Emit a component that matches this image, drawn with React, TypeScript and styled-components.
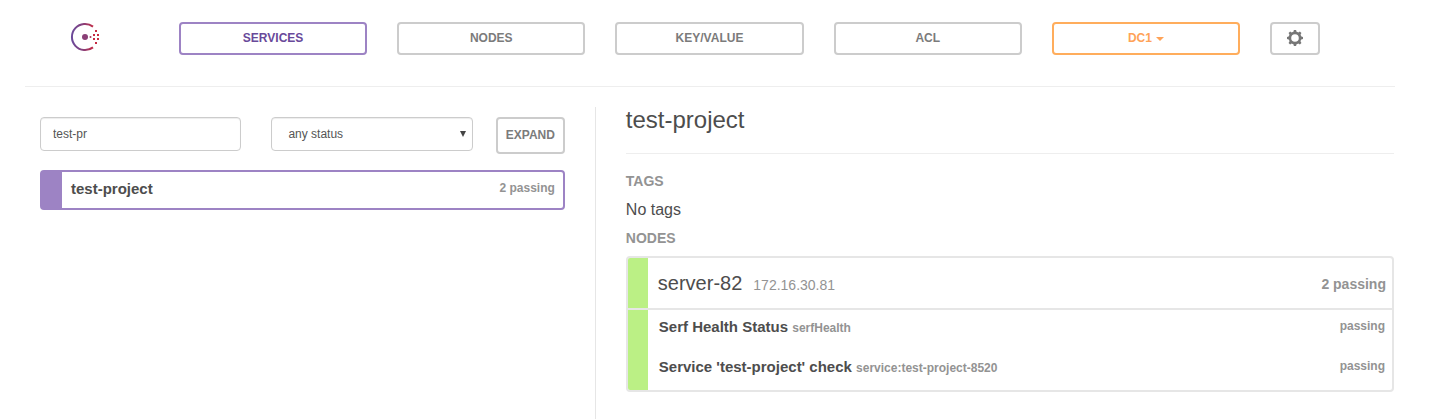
import React, { useState } from 'react';
import styled, { createGlobalStyle } from 'styled-components';

const GlobalStyle = createGlobalStyle`
  *, *::before, *::after { box-sizing: border-box; }
  body {
    margin: 0;
    background: #fff;
    color: #4d4d4d;
    font-family: "Liberation Sans", Arial, sans-serif;
    font-size: 16px;
    line-height: 20px;
  }
  button, input, select { font-family: inherit; }
`;

const Page = styled.div`
  display: flex;
  flex-direction: column;
  min-height: 100vh;
  padding: 0 51px 0 25px;
`;

const Header = styled.header`
  display: flex;
  align-items: flex-start;
  padding: 22px 75px 31px 45px;
  border-bottom: 1px solid #eee;
`;

const Brand = styled.a`
  flex: none;
  width: 109px;
  height: 30px;

  svg { display: block; }
`;

const Nav = styled.nav`
  display: flex;
  flex: 1;
  gap: 30px;
`;

type Tone = 'default' | 'primary' | 'warning';

const tones: Record<Tone, { border: string; text: string }> = {
  default: { border: '#ccc', text: '#7b7b7b' },
  primary: { border: '#9d83c4', text: '#69499a' },
  warning: { border: '#ffad5c', text: '#ffa358' },
};

const Button = styled.button<{ $tone?: Tone; $size?: 'fill' | 'icon' | 'tall' }>`
  display: flex;
  align-items: center;
  justify-content: center;
  flex: ${({ $size = 'fill' }) => ($size === 'fill' ? '1 1 0' : 'none')};
  width: ${({ $size }) => ($size === 'icon' ? '50px' : $size === 'tall' ? '69px' : 'auto')};
  height: ${({ $size }) => ($size === 'tall' ? '37px' : '33px')};
  padding: 0 0 1px;
  border: 2px solid ${({ $tone = 'default' }) => tones[$tone].border};
  border-radius: 4px;
  background: #fff;
  color: ${({ $tone = 'default' }) => tones[$tone].text};
  font-size: 12px;
  font-weight: 700;
  line-height: 16px;
  text-transform: uppercase;
  cursor: pointer;
`;

const Caret = styled.span`
  margin: 2px 0 0 4px;
  border: 4px solid transparent;
  border-top-color: currentColor;
  border-bottom: 0;
`;

const Main = styled.main`
  display: grid;
  grid-template-columns: 5fr 7fr;
  flex: 1;
  padding-top: 20px;
`;

const ListColumn = styled.section`
  padding: 10px 30px 0 15px;
  border-right: 1px solid #e6e6e6;
`;

const DetailColumn = styled.section`
  padding: 0 1px 0 30px;
`;

const Filters = styled.form`
  display: flex;
  align-items: flex-start;
  margin-bottom: 16px;
`;

const Field = styled.label<{ $gap: number }>`
  position: relative;
  flex: 1 1 0;
  margin-right: ${({ $gap }) => $gap}px;
`;

const SearchInput = styled.input`
  display: block;
  width: 100%;
  height: 34px;
  padding: 0 12px;
  border: 1px solid #ccc;
  border-radius: 4px;
  background: #fff;
  box-shadow: inset 0 1px 1px rgba(0, 0, 0, 0.075);
  color: #555;
  font-size: 12px;
`;

const StatusSelect = styled.select`
  display: block;
  width: 100%;
  height: 34px;
  padding: 0 16px;
  border: 1px solid #ccc;
  border-radius: 4px;
  background: #fff;
  box-shadow: inset 0 1px 1px rgba(0, 0, 0, 0.075);
  color: #555;
  font-size: 12px;
  appearance: none;
`;

const SelectArrow = styled.span`
  position: absolute;
  top: 14px;
  right: 7px;
  border: 3px solid transparent;
  border-top: 6px solid #444;
  border-bottom: 0;
  pointer-events: none;
`;

const ServiceRow = styled.a`
  display: flex;
  justify-content: space-between;
  height: 40px;
  padding: 7px 8px 0 9px;
  border: 2px solid #9d83c4;
  border-left-width: 22px;
  border-radius: 4px;
  color: inherit;
  text-decoration: none;
`;

const Name = styled.span`
  font-size: 15px;
  font-weight: 700;
  line-height: 20px;
`;

const Status = styled.span<{ $large?: boolean }>`
  color: #939393;
  font-size: ${({ $large }) => ($large ? 14 : 12)}px;
  font-weight: 700;
  line-height: ${({ $large }) => ($large ? 20 : 18)}px;
`;

const Title = styled.h1`
  margin: 0;
  padding-bottom: 20px;
  border-bottom: 1px solid #eee;
  font-size: 24px;
  font-weight: 400;
  line-height: 26px;
`;

const SectionTitle = styled.h2`
  margin: 0;
  color: #939393;
  font-size: 14px;
  font-weight: 700;
  line-height: 20px;
`;

const Tags = styled.div`
  padding-top: 17px;
`;

const TagText = styled.p`
  margin: 9px 0 8px;
`;

const NodePanel = styled.article`
  margin-top: 8px;
  border: 2px solid #e6e6e6;
  border-radius: 4px;
  overflow: hidden;
  background: #fff;
`;

const NodeHead = styled.a`
  display: flex;
  align-items: center;
  justify-content: space-between;
  height: 50px;
  padding: 2px 6px 0 10px;
  border-left: 20px solid #bbf085;
  color: inherit;
  text-decoration: none;
`;

const NodeName = styled.span`
  font-size: 20px;
  line-height: 24px;
`;

const Address = styled.small`
  margin-left: 11px;
  color: #939393;
  font-size: 14px;
`;

const Divider = styled.div`
  height: 2px;
  background: #e6e6e6;
`;

const Checks = styled.ul`
  margin: 0;
  padding: 0;
  border-left: 20px solid #bbf085;
  list-style: none;
`;

const Check = styled.li`
  display: flex;
  justify-content: space-between;
  height: 40px;
  padding: 7px 7px 0 11px;
`;

const CheckId = styled.small`
  color: #939393;
  font-size: 12px;
`;

function Logo() {
  return (
    <svg width="32" height="30" viewBox="0 0 32 30" role="img" aria-label="Consul">
      <defs>
        <linearGradient id="ring" x1="1" y1="0" x2="24" y2="0" gradientUnits="userSpaceOnUse">
          <stop offset="0" stopColor="#694a9c" />
          <stop offset="0.5" stopColor="#85407c" />
          <stop offset="1" stopColor="#c62a42" />
        </linearGradient>
      </defs>
      <path d="M23 4.6A13.1 13.1 0 1 0 23 25.4" fill="none" stroke="url(#ring)" strokeWidth="2" />
      <circle cx="15" cy="15" r="3" fill="#8a3f76" />
      <circle cx="20.5" cy="15" r="1" fill="#ad3659" />
      <g fill="#c62a42">
        <rect x="25" y="8" width="2" height="2" />
        <rect x="23" y="12" width="2" height="2" />
        <rect x="27" y="12" width="2" height="2" />
        <rect x="23" y="16" width="2" height="2" />
        <rect x="27" y="16" width="2" height="2" />
        <rect x="25" y="20" width="2" height="2" />
      </g>
    </svg>
  );
}

function Gear() {
  return (
    <svg width="16" height="16" viewBox="0 0 16 16" aria-hidden="true">
      <circle cx="8" cy="8" r="5.1" fill="none" stroke="#777" strokeWidth="2.6" />
      <g fill="#777">
        {[0, 45, 90, 135, 180, 225, 270, 315].map((angle) => (
          <path key={angle} d="M6.3 2.6L6.9 0H9.1L9.7 2.6Z" transform={`rotate(${angle} 8 8)`} />
        ))}
      </g>
    </svg>
  );
}

const checks = [
  { name: 'Serf Health Status', id: 'serfHealth', status: 'passing' },
  { name: "Service 'test-project' check", id: 'service:test-project-8520', status: 'passing' },
];

export default function App() {
  const [query, setQuery] = useState('test-pr');

  return (
    <>
      <GlobalStyle />
      <Page>
        <Header>
          <Brand href="#"><Logo /></Brand>
          <Nav>
            <Button $tone="primary">Services</Button>
            <Button>Nodes</Button>
            <Button>Key/Value</Button>
            <Button>ACL</Button>
            <Button $tone="warning" aria-haspopup="true">DC1<Caret /></Button>
            <Button $size="icon" aria-label="Settings"><Gear /></Button>
          </Nav>
        </Header>
        <Main>
          <ListColumn>
            <Filters onSubmit={(e) => e.preventDefault()}>
              <Field $gap={30}>
                <SearchInput
                  aria-label="Filter by name"
                  value={query}
                  onChange={(e) => setQuery(e.target.value)}
                />
              </Field>
              <Field $gap={23}>
                <StatusSelect aria-label="Status" defaultValue="any">
                  <option value="any">any status</option>
                  <option value="passing">passing</option>
                  <option value="failing">failing</option>
                </StatusSelect>
                <SelectArrow />
              </Field>
              <Button type="button" $size="tall">Expand</Button>
            </Filters>
            <ServiceRow href="#test-project">
              <Name>test-project</Name>
              <Status>2 passing</Status>
            </ServiceRow>
          </ListColumn>
          <DetailColumn>
            <Title>test-project</Title>
            <Tags>
              <SectionTitle>TAGS</SectionTitle>
              <TagText>No tags</TagText>
            </Tags>
            <SectionTitle>NODES</SectionTitle>
            <NodePanel>
              <NodeHead href="#server-82">
                <NodeName>server-82<Address>172.16.30.81</Address></NodeName>
                <Status $large>2 passing</Status>
              </NodeHead>
              <Divider />
              <Checks>
                {checks.map((check) => (
                  <Check key={check.id}>
                    <Name>{check.name} <CheckId>{check.id}</CheckId></Name>
                    <Status>{check.status}</Status>
                  </Check>
                ))}
              </Checks>
            </NodePanel>
          </DetailColumn>
        </Main>
      </Page>
    </>
  );
}
